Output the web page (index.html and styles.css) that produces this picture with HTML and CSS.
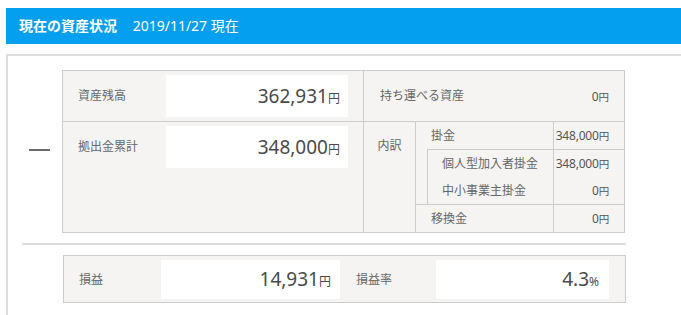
FILE: index.html
```html
<!DOCTYPE html>
<html lang="ja">
  <head>
    <meta charset="UTF-8" />
    <meta name="viewport" content="width=device-width, initial-scale=1.0" />
    <title>現在の資産状況</title>

    <link rel="stylesheet" href="styles.css">
  </head>

  <body>
    <div class="wrap">
      <h2 class="title">
        <span class="title-main">現在の資産状況</span>
        <span class="title-date">2019/11/27 現在</span>
      </h2>

      <div class="panel">
        <div class="calc">
          <div class="sign"><span class="minus"></span></div>

          <div class="sheet">
            <!-- 1段目 -->
            <div class="cell left">
              <div class="label">資産残高</div>
              <div class="amount">362,931<small>円</small></div>
            </div>
            <div class="cell right">
              <div class="label">持ち運べる資産</div>
              <div class="value">0<small>円</small></div>
            </div>

            <!-- 2段目 -->
            <div class="cell left">
              <div class="label">拠出金累計</div>
              <div class="amount">348,000<small>円</small></div>
            </div>
            <div class="cell breakdown">
              <div class="head">内訳</div>
              <div class="rows">
                <div class="group">
                  <div class="row">
                    <div class="name">掛金</div>
                    <div class="num">348,000<small>円</small></div>
                  </div>
                  <div class="sub">
                    <div class="row">
                      <div class="name">個人型加入者掛金</div>
                      <div class="num">348,000<small>円</small></div>
                    </div>
                    <div class="row">
                      <div class="name">中小事業主掛金</div>
                      <div class="num">0<small>円</small></div>
                    </div>
                  </div>
                </div>
                <div class="row">
                  <div class="name">移換金</div>
                  <div class="num">0<small>円</small></div>
                </div>
              </div>
            </div>
          </div>
        </div>

        <div class="rule"></div>

        <div class="result">
          <div class="label first">損益</div>
          <div class="amount profit">14,931<small>円</small></div>
          <div class="label second">損益率</div>
          <div class="amount rate">4.3<small>%</small></div>
        </div>
      </div>
    </div>
  </body>
</html>
```

FILE: styles.css
```css
html,
body {
  margin: 0;
  overflow: hidden;
}

body {
  font-family: "Noto Sans", "Noto Sans CJK JP", sans-serif;
  color: #555;
  background: #fff;
}

.wrap {
  width: 720px;
  margin: 8px 0 0 6px;
}

/* 見出しバー */
.title {
  margin: 0;
  height: 36px;
  padding-left: 13px;
  background: #049fee;
  color: #fff;
  font-size: 14px;
  line-height: 36px;
  font-weight: normal;
}

.title-main {
  font-weight: bold;
  margin-right: 12px;
}

.panel {
  margin-top: 10px;
  border-top: 2px solid #ddd;
  border-left: 2px solid #ddd;
  height: 270px;
}

.calc {
  display: flex;
  margin-top: 14px;
}

.sign {
  width: 54px;
  padding-top: 79px;
}

.minus {
  display: block;
  width: 21px;
  height: 2px;
  margin-left: 21px;
  background: #6a6a6a;
}

/* 資産テーブル */
.sheet {
  display: grid;
  grid-template-columns: 301px 260px;
  grid-template-rows: 51px 110px;
  border: 1px solid #ccc;
  background: #f5f4f2;
  font-size: 12px;
}

.cell {
  box-sizing: border-box;
}

.cell.left {
  display: flex;
  align-items: flex-start;
  padding: 4px 15px 4px 15px;
  border-right: 1px solid #ccc;
}

.sheet .cell:nth-child(1),
.sheet .cell:nth-child(2) {
  border-bottom: 1px solid #ccc;
}

.label {
  color: #666;
  line-height: 42px;
}

.cell.left .label {
  width: 88px;
}

.amount {
  box-sizing: border-box;
  width: 182px;
  height: 42px;
  padding-right: 8px;
  background: #fff;
  text-align: right;
  font-size: 19px;
  line-height: 42px;
  color: #4a4a4a;
}

.amount small {
  font-size: 12px;
}

.cell.right {
  display: flex;
  justify-content: space-between;
  align-items: center;
  padding: 0 15px 0 16px;
}

.value,
.num {
  color: #555;
  white-space: nowrap;
}

.value small,
.num small {
  font-size: 10.5px;
}

/* 内訳 */
.breakdown {
  display: flex;
}

.breakdown .head {
  width: 51px;
  border-right: 1px solid #ccc;
  padding-top: 15px;
  text-align: center;
  line-height: 18px;
  color: #666;
}

.rows {
  flex: 1;
}

.group {
  border-bottom: 1px solid #ccc;
}

.row {
  display: flex;
  height: 27px;
  line-height: 27px;
}

.row .name {
  flex: 1;
  padding-left: 15px;
  color: #666;
}

.row .num {
  box-sizing: border-box;
  display: flex;
  justify-content: flex-end;
  align-items: baseline;
  width: 71px;
  padding-right: 15px;
  border-left: 1px solid #ccc;
  letter-spacing: -0.2px;
}

.sub {
  margin-left: 11px;
  border-top: 1px solid #ccc;
  border-left: 1px solid #ccc;
}

.sub .name {
  padding-left: 14px;
}

/* 区切り線 */
.rule {
  width: 604px;
  height: 2px;
  margin: 10px 0 0 14px;
  background: #ddd;
}

/* 損益 */
.result {
  box-sizing: border-box;
  display: flex;
  width: 563px;
  margin: 10px 0 0 55px;
  padding: 4px 16px 3px 15px;
  border: 1px solid #ccc;
  background: #f5f4f2;
  font-size: 12px;
}

.result .label {
  line-height: 39px;
}

.result .first {
  width: 82px;
}

.result .second {
  width: 80px;
  padding-left: 16px;
}

.result .amount {
  height: 39px;
  line-height: 39px;
}

.result .profit {
  width: 179px;
  padding-right: 9px;
}

.result .rate {
  width: 173px;
  padding-right: 10px;
}
```
